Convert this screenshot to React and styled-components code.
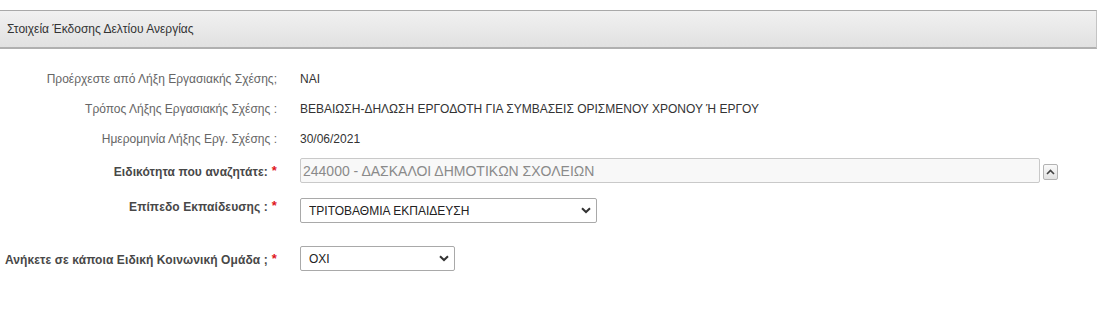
import React from 'react';
import styled, { createGlobalStyle } from 'styled-components';

const GlobalStyle = createGlobalStyle`
  body {
    margin: 0;
    background: #ffffff;
    font-family: 'Liberation Sans', Arial, sans-serif;
  }
`;

const Panel = styled.div`
  margin-top: 10px;
  width: 1097px;
`;

const Header = styled.div`
  height: 36px;
  display: flex;
  align-items: center;
  padding-left: 7px;
  border-top: 1px solid #a9a9a9;
  border-bottom: 2px solid #b0b0b0;
  border-right: 1px solid #c4c4c4;
  background: linear-gradient(#f1f1f1, #e1e1e1);
  color: #333333;
  font-size: 12px;
`;

const Form = styled.div`
  padding-top: 15px;
  display: flex;
  flex-direction: column;
`;

const Row = styled.div`
  display: grid;
  grid-template-columns: 277px 1fr;
  column-gap: 23px;
  align-items: ${p => p.$align || 'center'};
  min-height: ${p => p.$height || 30}px;
  margin-top: ${p => p.$top || 0}px;
`;

const Label = styled.div`
  text-align: right;
  font-size: 12px;
  color: ${p => (p.$bold ? '#484848' : '#666666')};
  font-weight: ${p => (p.$bold ? 'bold' : 'normal')};
  letter-spacing: ${p => (p.$bold ? '0.1px' : '0')};
`;

const Star = styled.span`
  color: #e0141e;
  font-size: 13px;
  margin-left: 4px;
  vertical-align: 1px;
`;

const Value = styled.div`
  font-size: 12px;
  color: #333333;
`;

const FieldLine = styled.div`
  display: flex;
  align-items: center;
  gap: 3px;
`;

const TextBox = styled.input`
  width: 740px;
  height: 25px;
  box-sizing: border-box;
  border: 1px solid #c9c9c9;
  border-radius: 2px;
  background: #f8f8f8;
  padding: 0 0 0 2px;
  font-family: 'Liberation Sans', Arial, sans-serif;
  font-size: 14px;
  color: #8a8a8a;
  outline: none;
`;

const ToggleButton = styled.button`
  width: 15px;
  height: 16px;
  padding: 0;
  margin-top: 2px;
  border: 1px solid #b3b3b3;
  border-radius: 2px;
  background: linear-gradient(#fafafa, #e2e2e2);
  display: flex;
  align-items: center;
  justify-content: center;
`;

const SelectWrap = styled.div`
  position: relative;
  width: ${p => p.$width}px;
  height: 25px;
`;

const Select = styled.select`
  appearance: none;
  width: 100%;
  height: 100%;
  box-sizing: border-box;
  border: 1px solid #a9a9a9;
  border-radius: 2px;
  background: #ffffff;
  padding: 0 0 0 8px;
  font-family: 'Liberation Sans', Arial, sans-serif;
  font-size: 12px;
  color: #222222;
  outline: none;
`;

const Chevron = styled.svg`
  position: absolute;
  right: 6px;
  top: 9px;
  pointer-events: none;
`;

const ChevronDown = () => (
  <Chevron width="10" height="7" viewBox="0 0 10 7">
    <path d="M1 1.2 L5 5 L9 1.2" fill="none" stroke="#333" strokeWidth="2" />
  </Chevron>
);

export default function App() {
  return (
    <>
      <GlobalStyle />
      <Panel>
        <Header>Στοιχεία Έκδοσης Δελτίου Ανεργίας</Header>
        <Form>
          <Row>
            <Label>Προέρχεστε από Λήξη Εργασιακής Σχέσης;</Label>
            <Value>NAI</Value>
          </Row>
          <Row>
            <Label>Τρόπος Λήξης Εργασιακής Σχέσης :</Label>
            <Value>ΒΕΒΑΙΩΣΗ-ΔΗΛΩΣΗ ΕΡΓΟΔΟΤΗ ΓΙΑ ΣΥΜΒΑΣΕΙΣ ΟΡΙΣΜΕΝΟΥ ΧΡΟΝΟΥ Ή ΕΡΓΟΥ</Value>
          </Row>
          <Row>
            <Label>Ημερομηνία Λήξης Εργ. Σχέσης :</Label>
            <Value>30/06/2021</Value>
          </Row>
          <Row $height={25} $top={4}>
            <Label $bold>
              Ειδικότητα που αναζητάτε:<Star>*</Star>
            </Label>
            <FieldLine>
              <TextBox readOnly value="244000 - ΔΑΣΚΑΛΟΙ ΔΗΜΟΤΙΚΩΝ ΣΧΟΛΕΙΩΝ" />
              <ToggleButton>
                <svg width="9" height="6" viewBox="0 0 9 6">
                  <path d="M1 5 L4.5 1.5 L8 5" fill="none" stroke="#444" strokeWidth="1.6" />
                </svg>
              </ToggleButton>
            </FieldLine>
          </Row>
          <Row $height={25} $top={15} $align="start">
            <Label $bold>
              Επίπεδο Εκπαίδευσης :<Star>*</Star>
            </Label>
            <SelectWrap $width={297}>
              <Select defaultValue="3">
                <option value="3">ΤΡΙΤΟΒΑΘΜΙΑ ΕΚΠΑΙΔΕΥΣΗ</option>
              </Select>
              <ChevronDown />
            </SelectWrap>
          </Row>
          <Row $height={25} $top={23}>
            <Label $bold>
              Ανήκετε σε κάποια Ειδική Κοινωνική Ομάδα ;<Star>*</Star>
            </Label>
            <SelectWrap $width={155}>
              <Select defaultValue="no">
                <option value="no">ΟΧΙ</option>
              </Select>
              <ChevronDown />
            </SelectWrap>
          </Row>
        </Form>
      </Panel>
    </>
  );
}
